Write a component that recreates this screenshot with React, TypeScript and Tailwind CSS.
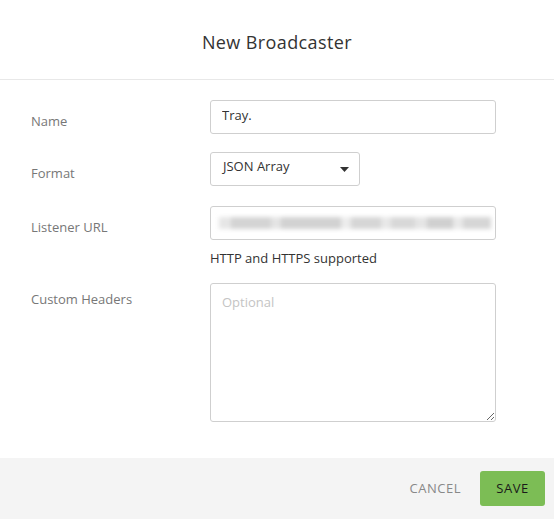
const font = { fontFamily: '"Open Sans", "Liberation Sans", sans-serif' };

// blurred URL placeholder: widths and shades of the smudged blocks
const blurBlocks = [
  { w: 12, c: "bg-[#e6e6e6]" },
  { w: 40, c: "bg-[#d4d4d4]" },
  { w: 10, c: "bg-[#e4e4e4]" },
  { w: 60, c: "bg-[#d2d2d2]" },
  { w: 10, c: "bg-[#ececec]" },
  { w: 30, c: "bg-[#d6d6d6]" },
  { w: 10, c: "bg-[#e8e8e8]" },
  { w: 24, c: "bg-[#d8d8d8]" },
  { w: 12, c: "bg-[#e5e5e5]" },
  { w: 26, c: "bg-[#d0d0d0]" },
  { w: 10, c: "bg-[#e9e9e9]" },
  { w: 28, c: "bg-[#d6d6d6]" },
];

function Label({ children }: { children: React.ReactNode }) {
  return (
    <div className="w-[179px] shrink-0 text-[13px] text-[#777] pt-[10px]">{children}</div>
  );
}

export default function App() {
  return (
    <div className="w-[554px] h-[519px] bg-white flex flex-col" style={font}>
      <header className="h-[80px] pt-[6px] flex items-center justify-center border-b border-[#e8e8e8]">
        <h1 className="text-[18px] text-[#333] tracking-[0.4px]">New Broadcaster</h1>
      </header>

      <main className="flex-1 pl-[31px] pt-[20px]">
        <div className="flex items-center">
          <Label>Name</Label>
          <input
            defaultValue="Tray."
            className="w-[286px] h-[34px] px-[11px] pb-[4px] border border-[#cfcfcf] rounded-[3px] text-[13px] text-[#333] outline-none"
          />
        </div>

        <div className="flex items-center mt-[18px]">
          <Label>Format</Label>
          <div className="w-[150px] h-[34px] pl-[12px] pr-[10px] pb-[4px] border border-[#cfcfcf] rounded-[3px] flex items-center justify-between text-[13px] text-[#333]">
            <span>JSON Array</span>
            <svg width="9" height="5" viewBox="0 0 9 5" className="mt-[4px]">
              <path d="M0 0h9L4.5 5z" fill="#333" />
            </svg>
          </div>
        </div>

        <div className="flex items-center mt-[20px]">
          <Label>Listener URL</Label>
          <div className="w-[286px] h-[34px] px-[8px] border border-[#cfcfcf] rounded-[3px] flex items-center">
            <div className="flex h-[12px] blur-[2px]">
              {blurBlocks.map((b, i) => (
                <div key={i} className={b.c} style={{ width: b.w }} />
              ))}
            </div>
          </div>
        </div>
        <div className="ml-[179px] mt-[9px] text-[13px] text-[#333]">HTTP and HTTPS supported</div>

        <div className="flex items-start mt-[14px]">
          <div className="-mt-[3px]">
            <Label>Custom Headers</Label>
          </div>
          <textarea
            placeholder="Optional"
            className="w-[286px] h-[139px] px-[11px] py-[9px] border border-[#cfcfcf] rounded-[3px] text-[13px] text-[#333] placeholder:text-[#c4c4c4] outline-none"
          />
        </div>
      </main>

      <footer className="h-[61px] bg-[#f4f4f4] flex items-center justify-end pr-[9px] gap-[19px]">
        <button className="text-[13px] text-[#888] tracking-[0.5px]">CANCEL</button>
        <button className="w-[65px] h-[35px] bg-[#7cbd55] rounded-[3px] text-[13px] text-[#1a1a1a] tracking-[0.5px]">
          SAVE
        </button>
      </footer>
    </div>
  );
}
